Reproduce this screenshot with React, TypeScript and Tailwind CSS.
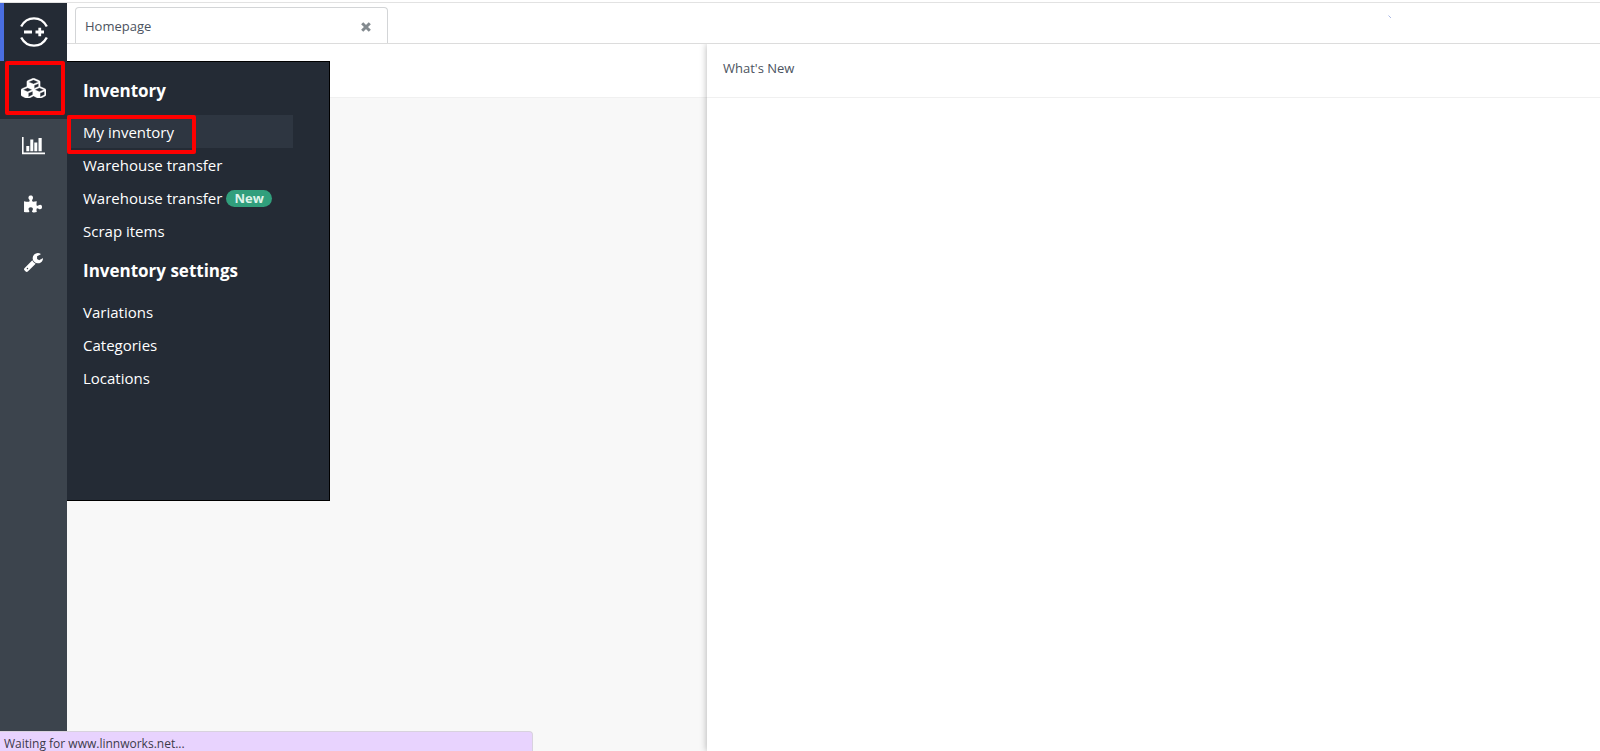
import type { ReactNode } from 'react'

type MenuItem = { label: string; badge?: string; active?: boolean }

const MENU: { title: string; items: MenuItem[] }[] = [
  {
    title: 'Inventory',
    items: [
      { label: 'My inventory', active: true },
      { label: 'Warehouse transfer' },
      { label: 'Warehouse transfer', badge: 'New' },
      { label: 'Scrap items' },
    ],
  },
  {
    title: 'Inventory settings',
    items: [{ label: 'Variations' }, { label: 'Categories' }, { label: 'Locations' }],
  },
]

function LogoIcon() {
  return (
    <svg width="28" height="30" viewBox="0 0 28 30" fill="none" stroke="#fff" strokeWidth="2.4">
      <path d="M1.200 9.500C4 4.200 8.600 1.400 14 1.400s10 2.800 12.800 8.100" />
      <path d="M1.200 20.500C4 25.800 8.600 28.600 14 28.600s10-2.800 12.800-8.100" />
      <path d="M4 15h8M15.500 15h8.500M19.750 10.800v8.400" strokeWidth="2.800" />
    </svg>
  )
}

function CubesIcon() {
  return (
    <svg width="25" height="20" viewBox="0 0 2176 1700" fill="#fff" fillRule="evenodd">
      <path d="M640 1632l384-192v-314l-384 164v342zm-64-454l404-173-404-173-404 173zm1088 454l384-192v-314l-384 164v342zm-64-454l404-173-404-173-404 173zm-448-293l384-165V454l-384 164v267zm-64-379l441-189-441-189-441 189zm1088 518v416q0 36-19 67t-52 47l-448 224q-25 14-57 14t-57-14l-448-224q-4-2-7-4-2 2-7 4l-448 224q-25 14-57 14t-57-14L71 1554q-33-16-52-47t-19-67v-416q0-38 21.500-70T78 906l434-186V320q0-38 21.500-70T590 202l448-192q23-10 50-10t50 10l448 192q35 16 56.500 48t21.500 70v400l434 186q36 16 57 48t21 70z" stroke="#fff" strokeWidth="30" />
    </svg>
  )
}

function ChartIcon() {
  return (
    <svg width="23" height="18" viewBox="0 0 23 18" fill="#fff">
      <path d="M0 0h1.600v15.600H23V17.200H0z" />
      <path d="M4.300 9h3v5.300h-3zM8.300 2.500h3v11.800h-3zM12.300 5.500h3v8.800h-3zM16.500 1h3.200v13.300h-3.200z" />
    </svg>
  )
}

function PuzzleIcon() {
  return (
    <svg width="19" height="18" viewBox="0 0 20 19" fill="#fff">
      <path d="M0 6.500C2 7 4 7.200 5.200 7 6.400 6.700 6 5.600 5.300 4.600 4 2.600 4.900.4 7.100.4s3.100 2.200 1.900 4.200C8.200 5.900 8.200 7 9.500 7c1.300 0 2.600-.3 4-.4-.3 1.600-.5 3-.3 4 .3 1.200 1.200 1 2.200.3 1.700-1.200 3.600-.5 3.600 1.700s-1.900 3-3.600 1.800c-1-.7-2-.8-2.200.4-.2.900 0 2 .3 3.200-1.800.4-3.200.5-4.200.2-1.200-.3-1-1.200-.3-2.100 1-1.500.2-3.100-1.900-3.100s-3 1.600-1.900 3.100c.6.900.7 1.800-.4 2.100C3.600 18.500 1.800 18.200 0 18z" />
    </svg>
  )
}

function WrenchIcon() {
  return (
    <svg width="19" height="19" viewBox="85 128 1642 1644" fill="#fff">
      <path d="M448 1472q0-26-19-45t-45-19-45 19-19 45 19 45 45 19 45-19 19-45zm644-420l-682 682q-37 37-90 37-52 0-91-37L123 1627q-38-36-38-90 0-53 38-91l681-681q39 98 114.500 173.500T1092 1052zm634-435q0 39-23 106-47 134-164.500 217.500T1280 1024q-185 0-316.500-131.500T832 576t131.500-316.500T1280 128q58 0 121.500 16.500T1509 191q16 11 16 28t-16 28l-293 169v224l193 107q5-3 79-48.500t135.500-81T1694 582q15 0 23.500 10t8.500 25z" />
    </svg>
  )
}

function NavButton({ label, active, children }: { label: string; active?: boolean; children: ReactNode }) {
  return (
    <button
      type="button"
      aria-label={label}
      className={`relative flex h-[58px] w-full items-center justify-center pb-1 ${active ? 'bg-[#242b35]' : ''}`}
    >
      {children}
      {active && <span className="absolute top-0 right-0.5 bottom-1 left-[5px] rounded-xs border-4 border-[#fe0000]" />}
    </button>
  )
}

function Sidebar() {
  return (
    <nav className="w-[67px] shrink-0 bg-[#3c444d]">
      <a
        href="#home"
        aria-label="Home"
        className="flex h-[58px] items-center justify-center border-l-4 border-[#4a6ee0] bg-[#242b35] pr-1"
      >
        <LogoIcon />
      </a>
      <NavButton label="Inventory" active>
        <CubesIcon />
      </NavButton>
      <NavButton label="Dashboards">
        <ChartIcon />
      </NavButton>
      <NavButton label="Apps">
        <PuzzleIcon />
      </NavButton>
      <NavButton label="Settings">
        <WrenchIcon />
      </NavButton>
    </nav>
  )
}

function InventoryMenu() {
  return (
    <div className="absolute top-[61px] left-[67px] h-[440px] w-[263px] border-t border-r border-b border-black bg-[#242b35] pt-2 text-white">
      {MENU.map((section) => (
        <section key={section.title}>
          <h2 className="px-4 pt-2 pb-3 text-[17px] leading-[25px] font-bold">{section.title}</h2>
          <ul className="mr-9 pb-[3px]">
            {section.items.map((item, i) => (
              <li key={i} className={`relative ${item.active ? 'bg-[#2e3641]' : ''}`}>
                <a href="#inventory" className="flex h-[33px] items-center px-4 pt-0.5 text-[15px]">
                  {item.label}
                  {item.badge && (
                    <span className="ml-1 rounded-full bg-[#319f7c] px-2 text-[13px] leading-[17px] font-bold text-[#dff3ea]">
                      {item.badge}
                    </span>
                  )}
                </a>
                {item.active && <span className="absolute top-0 -bottom-1.5 left-0 w-[129px] rounded-xs border-4 border-[#fe0000]" />}
              </li>
            ))}
          </ul>
        </section>
      ))}
    </div>
  )
}

export default function App() {
  return (
    <div className="relative flex h-screen flex-col overflow-hidden bg-white pt-0.5 font-['Open_Sans',sans-serif] text-[#4b5360]">
      <div className="flex min-h-0 flex-1 border-t border-[#e2e2e2]">
        <Sidebar />
        <div className="flex min-w-0 flex-1 flex-col">
          <header className="flex h-[41px] shrink-0 items-end justify-between border-b border-[#dcdcdc] pl-2">
            <div className="flex h-9 w-[313px] items-center justify-between rounded-t border border-b-0 border-[#d3d5d7] pt-0.5 pr-4 pl-[9px]">
              <span className="text-[13px]">Homepage</span>
              <button type="button" aria-label="Close tab">
                <svg width="10" height="10" viewBox="0 0 10 10" stroke="#838a8f" strokeWidth="3">
                  <path d="M1.200 1.200l7.600 7.600M8.800 1.200L1.200 8.800" />
                </svg>
              </button>
            </div>
            <svg className="mr-52 mb-6" width="4" height="4" viewBox="0 0 4 4" stroke="#a9b8e6" aria-hidden="true">
              <path d="M.5.500l2.500 2.500" />
            </svg>
          </header>
          <main className="flex min-h-0 flex-1">
            <section className="w-[640px] shrink-0 bg-[#f8f8f8]">
              <div className="h-[54px] border-b border-[#f0f0f0] bg-white" />
            </section>
            <section className="relative min-w-0 flex-1 bg-white shadow-[0_0_7px_rgba(0,0,0,0.3)] [clip-path:inset(0_0_0_-10px)]">
              <h2 className="flex h-[54px] items-center border-b border-[#f0f0f0] px-4 pb-1 text-[13px]">What's New</h2>
            </section>
          </main>
        </div>
      </div>
      <InventoryMenu />
      <div className="absolute bottom-0 left-0 h-5 w-1/3 rounded-tr border-t border-r border-[#d8d2de] bg-[#e8d3fe] pl-1 text-[12px] leading-6 text-[#3c3a4a]">
        Waiting for www.linnworks.net...
      </div>
    </div>
  )
}
